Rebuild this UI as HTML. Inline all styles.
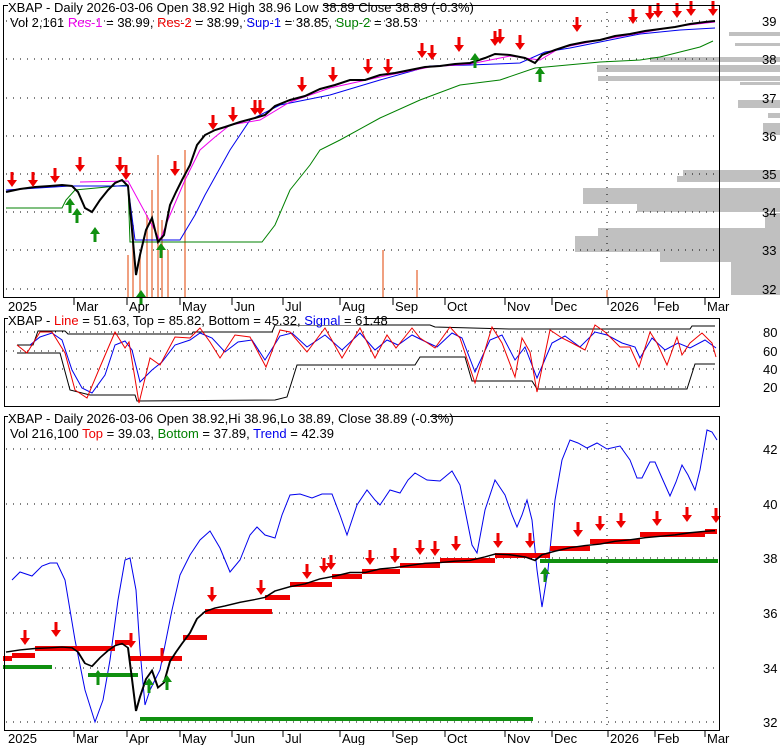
<!DOCTYPE html>
<html><head><meta charset="utf-8"><style>
html,body{margin:0;padding:0;background:#fff;width:780px;height:745px;overflow:hidden}
svg{display:block}
text{font-family:"Liberation Sans",Arial,sans-serif;font-size:13px}
</style></head><body>
<svg width="780" height="745" viewBox="0 0 780 745" xmlns="http://www.w3.org/2000/svg">
<defs>
<path id="da" d="M0,0 L-5,-7 L-1.5,-7 L-1.5,-15 L1.5,-15 L1.5,-7 L5,-7Z" fill="#ee0000"/>
<path id="ua" d="M0,0 L-5,7 L-1.5,7 L-1.5,15 L1.5,15 L1.5,7 L5,7Z" fill="#109010"/>
<polyline id="price" fill="none" stroke="#000" stroke-width="2" points="6,192 20,189 35,187 50,186 62,185 72,186 78,192 85,208 92,212 100,200 108,190 115,183 122,180 128,186 132,230 136,275 140,255 146,230 152,218 158,242 164,235 170,205 176,192 182,180 190,165 197,145 205,135 215,130 225,127 240,122 255,118 265,115 275,106 290,100 305,96 320,89 335,85 350,80 365,80 380,75 395,73 410,70 425,67 440,66 455,64 470,63 485,58 495,54 510,55 525,58 535,63 542,55 555,50 570,45 585,42 600,40 615,36 630,34 645,31 660,29 675,27 690,24 705,22 715,21"/>
</defs>

<!-- ============ TOP PANEL ============ -->
<g fill="#c0c0c0">
<rect x="729" y="32" width="51" height="4"/>
<rect x="735" y="43" width="45" height="3"/>
<rect x="650" y="57" width="130" height="5"/>
<rect x="597" y="65" width="183" height="7"/>
<rect x="598" y="76" width="182" height="5"/>
<rect x="740" y="82" width="40" height="3"/>
<rect x="738" y="100" width="42" height="8"/>
<rect x="768" y="113" width="12" height="5"/>
<rect x="763" y="123" width="17" height="12"/>
<rect x="683" y="170" width="97" height="6"/>
<rect x="677" y="176" width="103" height="6"/>
<rect x="583" y="188" width="197" height="16"/>
<rect x="637" y="204" width="143" height="8"/>
<rect x="765" y="213" width="15" height="19"/>
<rect x="598" y="228" width="182" height="8"/>
<rect x="575" y="236" width="205" height="16"/>
<rect x="660" y="252" width="120" height="10"/>
<rect x="731" y="262" width="49" height="33"/>
</g>
<g stroke="#000" stroke-width="1" stroke-dasharray="1,6">
<line x1="6" y1="21" x2="719" y2="21"/><line x1="6" y1="59" x2="719" y2="59"/>
<line x1="6" y1="98" x2="719" y2="98"/><line x1="6" y1="136" x2="719" y2="136"/>
<line x1="6" y1="174" x2="719" y2="174"/><line x1="6" y1="212" x2="719" y2="212"/>
<line x1="6" y1="250" x2="719" y2="250"/><line x1="6" y1="289" x2="719" y2="289"/>
<line x1="607" y1="5" x2="607" y2="297"/>
</g>
<g stroke="#f0a080" stroke-width="2">
<line x1="128" y1="297" x2="128" y2="255"/><line x1="133" y1="297" x2="133" y2="225"/>
<line x1="140" y1="297" x2="140" y2="255"/><line x1="147" y1="297" x2="147" y2="215"/>
<line x1="152" y1="297" x2="152" y2="190"/><line x1="158" y1="297" x2="158" y2="155"/>
<line x1="162" y1="297" x2="162" y2="220"/><line x1="168" y1="297" x2="168" y2="250"/>
<line x1="185" y1="297" x2="185" y2="150"/><line x1="383" y1="297" x2="383" y2="250"/>
<line x1="417" y1="297" x2="417" y2="270"/><line x1="607" y1="297" x2="607" y2="290"/>
</g>
<polyline fill="none" stroke="#008000" stroke-width="1" points="6,208 62,208 66,200 75,190 128,185 130,242 262,242 275,225 290,190 310,165 320,150 340,140 380,118 420,100 460,85 500,80 535,68 600,62 640,60 660,57 700,47 713,41"/>
<polyline fill="none" stroke="#0000ee" stroke-width="1" points="6,190 70,186 128,186 135,240 180,240 195,215 205,195 230,150 250,120 280,105 330,95 380,80 430,66 470,65 520,63 545,52 570,48 600,42 640,34 680,30 715,28"/>
<polyline fill="none" stroke="#ee00ee" stroke-width="1" points="80,182 128,181 160,240 170,215 185,180 200,150 215,137 230,125 260,120 290,102 330,88 380,77 430,67 470,64 510,56 540,60 560,48 600,40 640,33 680,26 715,22"/>
<use href="#price"/>
<g>
<use href="#da" x="12" y="187"/><use href="#da" x="33" y="187"/><use href="#da" x="55" y="183"/>
<use href="#da" x="80" y="172"/><use href="#da" x="120" y="172"/><use href="#da" x="126" y="180"/>
<use href="#da" x="175" y="176"/><use href="#da" x="213" y="130"/><use href="#da" x="233" y="122"/>
<use href="#da" x="255" y="115"/><use href="#da" x="260" y="115"/><use href="#da" x="302" y="92"/>
<use href="#da" x="333" y="82"/><use href="#da" x="368" y="74"/><use href="#da" x="388" y="74"/>
<use href="#da" x="422" y="58"/><use href="#da" x="432" y="60"/><use href="#da" x="459" y="52"/>
<use href="#da" x="495" y="46"/><use href="#da" x="500" y="44"/><use href="#da" x="520" y="50"/>
<use href="#da" x="577" y="32"/><use href="#da" x="633" y="24"/><use href="#da" x="650" y="20"/>
<use href="#da" x="658" y="18"/><use href="#da" x="677" y="18"/><use href="#da" x="691" y="16"/>
<use href="#da" x="713" y="16"/>
<use href="#ua" x="70" y="198"/><use href="#ua" x="77" y="208"/><use href="#ua" x="95" y="227"/>
<use href="#ua" x="141" y="290"/><use href="#ua" x="161" y="243"/><use href="#ua" x="475" y="53"/>
<use href="#ua" x="540" y="67"/>
</g>
<rect x="3.5" y="5.5" width="716" height="292" fill="none" stroke="#000"/>
<rect x="8" y="0" width="315" height="12" fill="#fff"/>
<text x="8" y="12">XBAP - Daily 2026-03-06 Open 38.92  High 38.96  Low 38.89  Close 38.89 (-0.3%)</text>
<text x="10" y="27">Vol 2,161 <tspan fill="#ee00ee">Res-1</tspan> = 38.99, <tspan fill="#ee0000">Res-2</tspan> = 38.99, <tspan fill="#0000ee">Sup-1</tspan> = 38.85, <tspan fill="#008000">Sup-2</tspan> = 38.53</text>
<g fill="#000">
<text x="762" y="26">39</text><text x="762" y="64">38</text><text x="762" y="103">37</text>
<text x="762" y="141">36</text><text x="762" y="179">35</text><text x="762" y="217">34</text>
<text x="762" y="255">33</text><text x="762" y="294">32</text>
</g>
<g stroke="#000"><line x1="74" y1="298" x2="74" y2="305"/><line x1="127" y1="298" x2="127" y2="305"/><line x1="180" y1="298" x2="180" y2="305"/><line x1="232" y1="298" x2="232" y2="305"/><line x1="283" y1="298" x2="283" y2="305"/><line x1="340" y1="298" x2="340" y2="305"/><line x1="393" y1="298" x2="393" y2="305"/><line x1="445" y1="298" x2="445" y2="305"/><line x1="505" y1="298" x2="505" y2="305"/><line x1="552" y1="298" x2="552" y2="305"/><line x1="608" y1="298" x2="608" y2="305"/><line x1="655" y1="298" x2="655" y2="305"/><line x1="705" y1="298" x2="705" y2="305"/></g>
<g><text x="8" y="311">2025</text><text x="76" y="311">Mar</text><text x="129" y="311">Apr</text><text x="182" y="311">May</text><text x="234" y="311">Jun</text><text x="285" y="311">Jul</text><text x="342" y="311">Aug</text><text x="395" y="311">Sep</text><text x="447" y="311">Oct</text><text x="507" y="311">Nov</text><text x="554" y="311">Dec</text><text x="610" y="311">2026</text><text x="657" y="311">Feb</text><text x="707" y="311">Mar</text></g>

<!-- ============ MIDDLE PANEL ============ -->
<g stroke="#000" stroke-width="1" stroke-dasharray="1,6">
<line x1="6" y1="332" x2="719" y2="332"/><line x1="6" y1="351" x2="719" y2="351"/>
<line x1="6" y1="369" x2="719" y2="369"/><line x1="6" y1="387" x2="719" y2="387"/>
<line x1="607" y1="318" x2="607" y2="406"/>
</g>
<polyline fill="none" stroke="#000" points="17,345 33,345 38,331 65,331 68,334 192,334 193,332 272,332 275,325 430,325 435,327 472,328 510,329 690,329 692,326 715,326"/>
<polyline fill="none" stroke="#000" points="17,353 60,353 70,390 90,395 135,395 137,401 275,400 287,397 297,365 415,365 420,357 465,357 472,381 532,381 537,389 687,389 695,364 715,364"/>
<polyline fill="none" stroke="#0000ee" points="30,345 40,337 52,333 62,340 72,370 82,388 92,393 105,375 115,345 125,341 132,350 140,382 152,370 162,362 175,345 190,340 200,333 212,338 225,352 238,342 252,340 265,360 280,336 292,333 307,347 325,335 342,350 360,333 375,350 387,340 398,345 412,335 422,340 437,347 452,333 462,338 475,372 490,340 502,335 515,360 525,347 537,378 552,343 565,336 580,347 595,332 607,335 622,343 635,347 640,358 652,338 665,350 678,343 690,348 705,340 716,348"/>
<polyline fill="none" stroke="#ee0000" points="17,345 27,353 40,332 52,332 65,353 75,390 87,398 100,367 115,332 125,348 129,342 139,403 150,358 160,365 175,337 190,338 200,328 210,342 220,358 235,335 250,337 266,367 280,330 290,332 307,352 325,328 342,358 360,328 375,358 387,335 396,348 412,328 420,338 435,348 450,327 460,338 475,383 492,327 502,343 515,377 522,338 530,352 537,392 550,330 562,338 572,343 585,350 595,325 605,332 620,347 630,347 639,367 650,332 657,343 667,365 677,337 682,355 690,343 702,333 712,343 716,357"/>
<rect x="4.5" y="318.5" width="715" height="88" fill="none" stroke="#000"/>
<rect x="8" y="313" width="357" height="12" fill="#fff"/>
<text x="8" y="325">XBAP - <tspan fill="#ee0000">Line</tspan> = 51.63, Top = 85.82, Bottom = 45.32, <tspan fill="#0000ee">Signal</tspan> = 61.48</text>
<text x="763" y="337">80</text><text x="763" y="356">60</text><text x="763" y="374">40</text><text x="763" y="392">20</text>

<!-- ============ BOTTOM PANEL ============ -->
<g stroke="#000" stroke-width="1" stroke-dasharray="1,6">
<line x1="6" y1="449" x2="719" y2="449"/><line x1="6" y1="504" x2="719" y2="504"/>
<line x1="6" y1="558" x2="719" y2="558"/><line x1="6" y1="613" x2="719" y2="613"/>
<line x1="6" y1="668" x2="719" y2="668"/><line x1="6" y1="722" x2="719" y2="722"/>
<line x1="607" y1="416" x2="607" y2="730"/>
</g>
<polyline fill="none" stroke="#0000ee" points="12,580 20,572 32,576 42,566 50,563 57,563 65,580 75,640 85,690 95,722 103,700 110,660 118,600 125,560 130,558 136,590 140,650 145,705 150,690 160,670 172,610 180,575 190,555 200,540 210,531 220,548 230,572 240,560 250,535 257,527 265,535 275,538 282,515 290,495 300,494 312,498 322,494 332,494 340,515 347,535 357,505 367,490 375,500 380,505 390,490 400,493 408,480 415,473 427,480 440,481 452,471 460,485 465,510 472,545 477,553 485,510 495,480 505,495 512,515 517,527 522,515 527,500 532,520 537,570 542,607 548,570 555,500 562,460 570,440 578,443 587,448 597,443 607,449 620,446 630,460 637,478 642,478 650,462 655,462 662,478 670,496 676,482 682,465 688,475 695,490 700,470 707,430 712,432 717,440"/>
<g fill="#ee0000">
<rect x="3" y="656" width="9" height="5"/><rect x="12" y="653" width="23" height="5"/>
<rect x="35" y="646" width="80" height="5"/><rect x="115" y="640" width="15" height="5"/>
<rect x="130" y="656" width="52" height="5"/><rect x="183" y="635" width="24" height="5"/>
<rect x="205" y="609" width="67" height="5"/><rect x="265" y="595" width="25" height="5"/>
<rect x="290" y="582" width="42" height="5"/><rect x="332" y="574" width="30" height="5"/>
<rect x="362" y="569" width="38" height="5"/><rect x="400" y="563" width="40" height="5"/>
<rect x="440" y="558" width="55" height="5"/><rect x="495" y="553" width="55" height="5"/>
<rect x="550" y="546" width="40" height="5"/><rect x="590" y="539" width="50" height="5"/>
<rect x="640" y="532" width="65" height="5"/><rect x="705" y="529" width="12" height="5"/>
</g>
<g fill="#109010">
<rect x="3" y="665" width="49" height="4"/><rect x="88" y="673" width="50" height="4"/>
<rect x="140" y="717" width="393" height="4"/><rect x="540" y="559" width="178" height="4"/>
</g>
<use href="#price" transform="matrix(1 0 0 0.7102 0 515.7)"/>
<g>
<use href="#da" x="25" y="645"/><use href="#da" x="56" y="637"/><use href="#da" x="131" y="648"/>
<use href="#da" x="162" y="663"/><use href="#da" x="212" y="602"/><use href="#da" x="261" y="595"/>
<use href="#da" x="307" y="579"/><use href="#da" x="324" y="573"/><use href="#da" x="331" y="570"/>
<use href="#da" x="370" y="565"/><use href="#da" x="395" y="563"/><use href="#da" x="420" y="555"/>
<use href="#da" x="435" y="556"/><use href="#da" x="456" y="551"/><use href="#da" x="498" y="548"/>
<use href="#da" x="530" y="548"/><use href="#da" x="578" y="537"/><use href="#da" x="600" y="531"/>
<use href="#da" x="621" y="528"/><use href="#da" x="657" y="526"/><use href="#da" x="687" y="522"/>
<use href="#da" x="716" y="523"/>
<use href="#ua" x="98" y="670"/><use href="#ua" x="149" y="678"/><use href="#ua" x="167" y="675"/>
<use href="#ua" x="545" y="567"/>
</g>
<rect x="4.5" y="416.5" width="715" height="314" fill="none" stroke="#000"/>
<rect x="8" y="411" width="422" height="12" fill="#fff"/>
<text x="8" y="423">XBAP - Daily 2026-03-06 Open 38.92,Hi 38.96,Lo 38.89, Close 38.89 (-0.3%)</text>
<text x="10" y="438">Vol 216,100 <tspan fill="#ee0000">Top</tspan> = 39.03, <tspan fill="#008000">Bottom</tspan> = 37.89, <tspan fill="#0000ee">Trend</tspan> = 42.39</text>
<text x="763" y="454">42</text><text x="763" y="509">40</text><text x="763" y="563">38</text>
<text x="763" y="618">36</text><text x="763" y="673">34</text><text x="763" y="727">32</text>
<g stroke="#000"><line x1="74" y1="731" x2="74" y2="737"/><line x1="127" y1="731" x2="127" y2="737"/><line x1="180" y1="731" x2="180" y2="737"/><line x1="232" y1="731" x2="232" y2="737"/><line x1="283" y1="731" x2="283" y2="737"/><line x1="340" y1="731" x2="340" y2="737"/><line x1="393" y1="731" x2="393" y2="737"/><line x1="445" y1="731" x2="445" y2="737"/><line x1="505" y1="731" x2="505" y2="737"/><line x1="552" y1="731" x2="552" y2="737"/><line x1="608" y1="731" x2="608" y2="737"/><line x1="655" y1="731" x2="655" y2="737"/><line x1="705" y1="731" x2="705" y2="737"/></g>
<g><text x="8" y="743">2025</text><text x="76" y="743">Mar</text><text x="129" y="743">Apr</text><text x="182" y="743">May</text><text x="234" y="743">Jun</text><text x="285" y="743">Jul</text><text x="342" y="743">Aug</text><text x="395" y="743">Sep</text><text x="447" y="743">Oct</text><text x="507" y="743">Nov</text><text x="554" y="743">Dec</text><text x="610" y="743">2026</text><text x="657" y="743">Feb</text><text x="707" y="743">Mar</text></g>
</svg>
</body></html>
